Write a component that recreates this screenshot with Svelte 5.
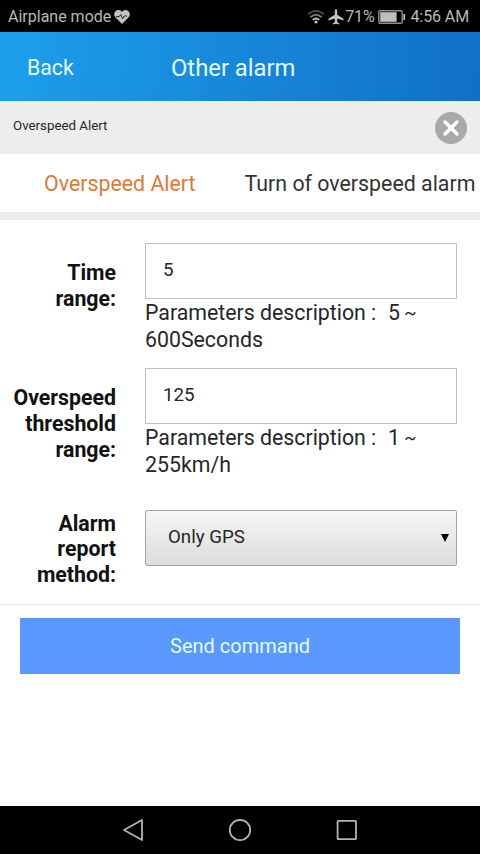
<script lang="ts">
	let timeRange = '5';
	let threshold = '125';
	let method = 'gps';
	let activeTab = 0;

	const tabs = ['Overspeed Alert', 'Turn of overspeed alarm'];
</script>

<div class="screen">
	<div class="status-bar">
		<span class="mode">Airplane mode</span>
		<svg class="heart" width="16" height="14" viewBox="0 0 16 14">
			<path d="M8 14L1.6 7.6C-1.6 4 1.3 0 4.4 0C6.2 0 7.3 .9 8 2C8.7 .9 9.8 0 11.6 0C14.7 0 17.6 4 14.4 7.6Z" fill="#c4c4c4" />
			<path d="M2 6.6H5.2L6.7 4.5L8.7 8.8L10.3 6H13" fill="none" stroke="#222" stroke-width="1" />
		</svg>
		<svg class="wifi" width="18" height="15" viewBox="0 0 18 15">
			<g fill="none" stroke-width="1.8">
				<path d="M1 5.4Q9 -1.6 17 5.4" stroke="#4a4a4a" />
				<path d="M3.4 8.2Q9 3.3 14.6 8.2" stroke="#777" />
				<path d="M5.7 10.9Q9 8 12.3 10.9" stroke="#c0c0c0" />
			</g>
			<circle cx="9" cy="13" r="1.6" fill="#c0c0c0" />
		</svg>
		<svg class="plane" width="16" height="16" viewBox="0 0 16 16">
			<path d="M8 .3C7.2 .3 6.8 1 6.8 1.9V5.7L.5 9.8V11.4L6.8 9.6V13L4.8 14.4V15.6L8 14.8L11.2 15.6V14.4L9.2 13V9.6L15.5 11.4V9.8L9.2 5.7V1.9C9.2 1 8.8 .3 8 .3Z" fill="#c4c4c4" />
		</svg>
		<span class="percent">71%</span>
		<svg class="battery" width="28" height="14" viewBox="0 0 28 14">
			<rect x=".8" y=".8" width="23.4" height="12.4" rx="1" fill="none" stroke="#8e8e8e" stroke-width="1.4" />
			<rect x="2.2" y="2.2" width="16.4" height="9.6" fill="#bebebe" />
			<path d="M26.2 4V10" stroke="#b8b8b8" stroke-width="1.8" />
		</svg>
		<span class="clock">4:56 AM</span>
	</div>

	<header>
		<button class="back">Back</button>
		<h1>Other alarm</h1>
	</header>

	<div class="crumb">
		<span>Overspeed Alert</span>
		<button class="close" aria-label="Close">
			<svg width="32" height="32" viewBox="0 0 32 32">
				<circle cx="16" cy="16" r="16" fill="#a9a9a9" />
				<path d="M10 10L22 22M22 10L10 22" stroke="#fff" stroke-width="3.4" stroke-linecap="round" />
			</svg>
		</button>
	</div>

	<nav class="tabs">
		{#each tabs as tab, i}
			<button class="tab" class:active={activeTab === i} on:click={() => (activeTab = i)}>{tab}</button>
		{/each}
	</nav>

	<div class="form">
		<div class="row">
			<label for="time">Time<br />range:</label>
			<div class="field">
				<input id="time" type="text" bind:value={timeRange} />
				<p>Parameters description<span class="colon">:</span>5 <span class="tilde">~</span><br />600Seconds</p>
			</div>
		</div>
		<div class="row">
			<label for="threshold">Overspeed<br />threshold<br />range:</label>
			<div class="field">
				<input id="threshold" type="text" bind:value={threshold} />
				<p>Parameters description<span class="colon">:</span>1 <span class="tilde">~</span><br />255km/h</p>
			</div>
		</div>
		<div class="row last">
			<label for="method">Alarm<br />report<br />method:</label>
			<div class="field select">
				<select id="method" bind:value={method}>
					<option value="gps">Only GPS</option>
				</select>
				<svg class="arrow" width="8" height="8" viewBox="0 0 8 8"><path d="M0 0H8L4 8Z" fill="#000" /></svg>
			</div>
		</div>
	</div>

	<div class="actions">
		<button class="send">Send command</button>
	</div>

	<div class="nav-bar">
		<svg width="22" height="24" viewBox="0 0 22 24">
			<path d="M20 2V22L2 12Z" fill="none" stroke="#b4b4b4" stroke-width="1.8" stroke-linejoin="round" />
		</svg>
		<svg width="24" height="24" viewBox="0 0 24 24">
			<circle cx="12" cy="12" r="10.2" fill="none" stroke="#b4b4b4" stroke-width="1.8" />
		</svg>
		<svg width="22" height="22" viewBox="0 0 22 22">
			<rect x="1.6" y="1.8" width="18.4" height="18.4" rx=".6" fill="none" stroke="#b4b4b4" stroke-width="1.8" />
		</svg>
	</div>
</div>

<style>
	:global(body) {
		margin: 0;
		background: #fff;
	}

	.screen {
		display: flex;
		flex-direction: column;
		width: 480px;
		height: 854px;
		overflow: hidden;
		font-family: Roboto, sans-serif;
		color: #262626;
		background: #fff;
	}

	button {
		padding: 0;
		border: none;
		background: none;
		font-family: inherit;
		cursor: pointer;
	}

	svg {
		display: block;
		flex: none;
	}

	.status-bar {
		display: flex;
		align-items: center;
		flex: none;
		box-sizing: border-box;
		height: 32px;
		padding: 1px 11px 0 8px;
		background: #000;
		color: #b9b9b9;
		font-size: 16px;
		white-space: nowrap;
	}

	.heart {
		margin-left: 3px;
	}

	.wifi {
		margin-left: auto;
	}

	.plane {
		margin-left: 3px;
	}

	.percent {
		margin-left: 1px;
		letter-spacing: -0.15px;
	}

	.battery {
		margin: 0 4px 0 4px;
	}

	.clock {
		letter-spacing: -0.1px;
	}

	header {
		display: flex;
		align-items: center;
		flex: none;
		box-sizing: border-box;
		height: 69px;
		padding: 2px 27px 0;
		background: linear-gradient(95deg, #1d9fec, #106fc8);
		color: #e4fbff;
	}

	.back {
		width: 70px;
		color: inherit;
		font-size: 21.3px;
		text-align: left;
	}

	h1 {
		margin: 0 0 0 74px;
		font-size: 23.8px;
		font-weight: 400;
	}

	.crumb {
		display: flex;
		align-items: center;
		justify-content: space-between;
		flex: none;
		box-sizing: border-box;
		height: 53px;
		padding: 1px 13px 0;
		background: #ededed;
		font-size: 13.3px;
	}

	.crumb span {
		margin-top: -6px;
	}

	.tabs {
		display: flex;
		align-items: center;
		flex: none;
		box-sizing: border-box;
		height: 66px;
		padding-left: 44px;
		border-bottom: 8px solid #ededed;
	}

	.tab {
		margin-right: 49px;
		color: #333;
		font-size: 21.35px;
		white-space: nowrap;
	}

	.active {
		color: #dc7a38;
	}

	.form {
		flex: none;
		box-sizing: border-box;
		height: 385px;
		padding: 23px 23px 0 0;
		border-bottom: 1px solid #e8e8e8;
	}

	.row {
		display: flex;
		height: 125.4px;
	}

	.last {
		margin-top: 16px;
	}

	label {
		flex: none;
		width: 116px;
		margin-right: 29px;
		padding-top: 17px;
		color: #111;
		font-size: 21.3px;
		font-weight: 700;
		line-height: 25.6px;
		text-align: right;
	}

	.last label {
		padding-top: 1px;
	}

	.field {
		flex: 1;
	}

	input,
	select {
		display: block;
		box-sizing: border-box;
		width: 312px;
		height: 56px;
		margin: 0;
		padding: 0 17px 2px;
		border: 1px solid #bfbfbf;
		border-radius: 0;
		outline: none;
		background: #fff;
		color: #262626;
		font-family: inherit;
		font-size: 18.7px;
	}

	p {
		margin: 1px 0 0;
		font-size: 21.3px;
		line-height: 26.7px;
		white-space: nowrap;
	}

	.colon {
		display: inline-block;
		width: 17px;
		padding-left: 5px;
	}

	.tilde {
		margin-left: -1px;
		font-size: 18px;
		vertical-align: 1px;
		line-height: 1;
	}

	.select {
		position: relative;
	}

	select {
		padding: 0 22px 2px;
		border-color: #a3a3a3;
		border-radius: 2px;
		background: linear-gradient(#f6f6f6, #dbdbdb);
		appearance: none;
	}

	.arrow {
		position: absolute;
		top: 24px;
		right: 8px;
		pointer-events: none;
	}

	.actions {
		flex: 1;
		padding: 13px 20px 0;
	}

	.send {
		display: block;
		width: 100%;
		height: 56px;
		background: #5998ff;
		color: #e4fbff;
		font-size: 20px;
	}

	.nav-bar {
		display: flex;
		align-items: center;
		justify-content: center;
		gap: 84px;
		flex: none;
		height: 48px;
		background: #000;
	}
</style>
